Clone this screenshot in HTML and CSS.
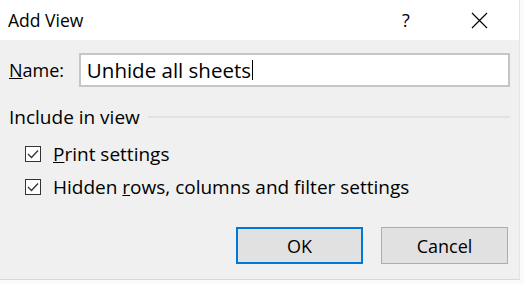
FILE: index.html
```html
<!DOCTYPE html>
<html lang="en">
<head>
    <meta charset="UTF-8">
    <meta name="viewport" content="width=device-width, initial-scale=1.0">
    <title>Add View</title>
    <link rel="stylesheet" href="styles.css">
</head>
<body>
    <div class="dialog">
        <div class="titlebar">
            <span class="title">Add View</span>
            <span class="help">?</span>
            <span class="close">
                <svg width="17" height="17" viewBox="0 0 17 17"><path d="M1 1 L16 16 M16 1 L1 16" stroke="#000" stroke-width="1.2" fill="none"/></svg>
            </span>
        </div>
        <div class="content">
            <div class="name-row">
                <label class="name-label" for="viewName"><u>N</u>ame:</label>
                <div class="textbox" id="viewName">Unhide all sheets<span class="caret"></span></div>
            </div>
            <div class="group-head">
                <span>Include in view</span>
                <span class="group-line"></span>
            </div>
            <div class="option first">
                <span class="check"><svg width="12" height="10" viewBox="0 0 12 10"><path d="M1 5 L4.5 8.5 L11 1.5" stroke="#333" stroke-width="1.3" fill="none"/></svg></span>
                <span><u>P</u>rint settings</span>
            </div>
            <div class="option">
                <span class="check"><svg width="12" height="10" viewBox="0 0 12 10"><path d="M1 5 L4.5 8.5 L11 1.5" stroke="#333" stroke-width="1.3" fill="none"/></svg></span>
                <span>Hidden <u>r</u>ows, columns and filter settings</span>
            </div>
            <div class="buttons">
                <button class="btn default">OK</button>
                <button class="btn">Cancel</button>
            </div>
        </div>
    </div>
</body>
</html>
```

FILE: styles.css
```css
body {
    margin: 0;
    background-color: #fafafa;
    font-family: "Open Sans", "Noto Sans", sans-serif;
    font-size: 19px;
    color: #000;
}
.dialog {
    width: 520px;
    height: 280px;
    background-color: #f0f0f0;
    border-right: 1px solid #e4e4e4;
    border-bottom: 1px solid #d8d8d8;
    box-sizing: border-box;
}
.titlebar {
    height: 40px;
    background-color: #fff;
    display: flex;
    align-items: center;
    padding-left: 8px;
}
.title {
    font-size: 17.5px;
}
.help {
    margin-left: auto;
    width: 20px;
    font-size: 18px;
}
.close {
    display: flex;
    margin-left: 49px;
    margin-right: 31px;
}
.content {
    padding: 13px 9px 0 9px;
}
.name-row {
    display: flex;
    align-items: center;
}
.name-label {
    width: 70px;
    font-size: 18px;
}
.textbox {
    width: 432px;
    height: 34px;
    box-sizing: border-box;
    border: 2px solid #c6c6c6;
    background-color: #fff;
    padding-left: 6px;
    display: flex;
    align-items: center;
    font-size: 20.5px;
}
.caret {
    width: 1px;
    height: 20px;
    background-color: #000;
    margin-left: 1px;
}
.group-head {
    display: flex;
    align-items: center;
    margin-top: 18px;
    height: 24px;
}
.group-line {
    flex: 1;
    height: 2px;
    background-color: #e2e2e2;
    margin-left: 8px;
}
.option {
    display: flex;
    align-items: center;
    height: 33px;
    padding-left: 16px;
}
.option.first {
    margin-top: 8px;
}
.check {
    width: 16px;
    height: 16px;
    box-sizing: border-box;
    border: 1px solid #333;
    background-color: #fff;
    display: flex;
    align-items: center;
    justify-content: center;
    margin-right: 12px;
}
.buttons {
    display: flex;
    justify-content: flex-end;
    gap: 18px;
    margin-top: 24px;
    padding-right: 2px;
}
.btn {
    width: 127px;
    height: 37px;
    box-sizing: border-box;
    background-color: #e1e1e1;
    border: 1px solid #adadad;
    font-family: inherit;
    font-size: 18px;
    color: #000;
    padding: 0;
}
.btn.default {
    border: 2px solid #0078d7;
}
```
